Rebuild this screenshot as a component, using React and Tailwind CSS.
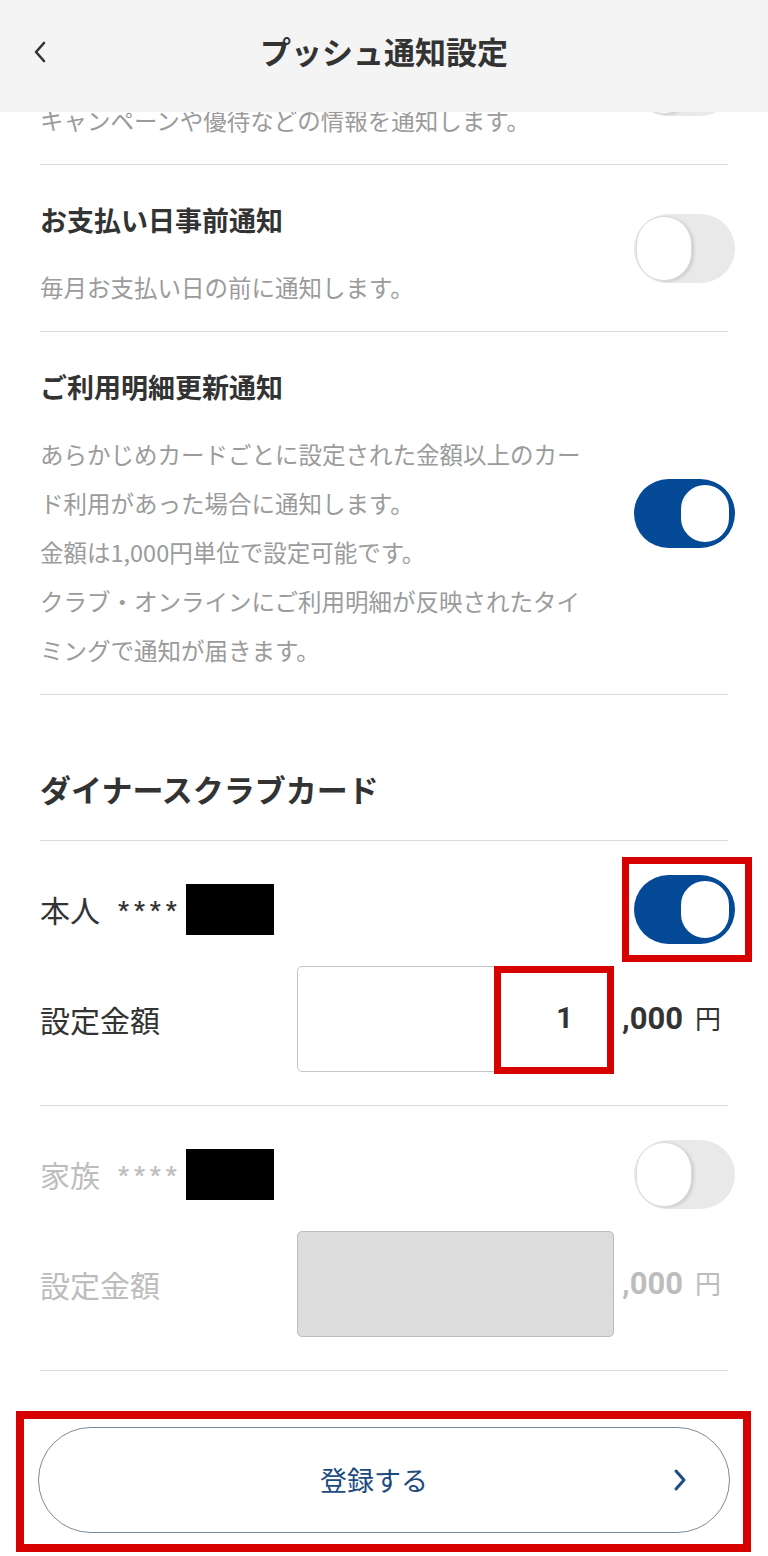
import React from "react";

function Toggle({ on }) {
  return (
    <div
      className={`w-[101px] h-[69px] rounded-full p-[2px] flex ${
        on ? "bg-[#054a96] justify-end" : "bg-[#e9e9e9] justify-start"
      }`}
    >
      <div
        className={`w-[56px] h-full rounded-full bg-white ${
          on ? "border-[4px] border-[#054a96]" : "border border-[#dadada] shadow-[2px_1px_3px_rgba(0,0,0,0.12)]"
        }`}
      />
    </div>
  );
}

function Section({ title, lines, on }) {
  return (
    <div className="flex items-center justify-between border-b border-[#dcdcdc]">
      <div className="pt-[37px] pb-[19px]">
        {title ? (
          <h2 className="text-[27px] leading-[36px] font-bold text-[#333]">{title}</h2>
        ) : (
          <div className="h-[36px]" />
        )}
        <div className="mt-[25px] text-[23.5px] leading-[49px] text-[#9b9b9b]">
          {lines.map((l) => (
            <p key={l} className="whitespace-nowrap">{l}</p>
          ))}
        </div>
      </div>
      <div className="-mr-[7px]">
        <Toggle on={on} />
      </div>
    </div>
  );
}

function CardBlock({ name, on, disabled, highlight }) {
  const text = disabled ? "text-[#bdbdbd]" : "text-[#333]";
  return (
    <div className="border-b border-[#dcdcdc] pt-[34px] pb-[33px]">
      <div className="flex items-center justify-between h-[69px]">
        <div className={`flex items-center text-[30px] ${text}`}>
          <span>{name}</span>
          <span className="ml-[18px] text-[24px] font-bold tracking-[5px] font-[family-name:Roboto,sans-serif]">****</span>
          <span className="ml-[4px] w-[88px] h-[51px] bg-black" />
        </div>
        <div className="relative -mr-[7px]">
          <Toggle on={on} />
          {highlight && (
            <span className="absolute -left-[12px] -right-[17px] -top-[18px] -bottom-[18px] border-[7px] border-[#d60000]" />
          )}
        </div>
      </div>
      <div className="flex items-center mt-[22px] h-[106px]">
        <span className={`w-[257px] text-[30px] ${text}`}>設定金額</span>
        <div
          className={`relative w-[317px] h-full rounded-[5px] border-[1.5px] flex items-center justify-end pr-[40px] ${
            disabled ? "bg-[#dcdcdc] border-[#bcbcbc]" : "bg-white border-[#c4c4c4]"
          }`}
        >
          {!disabled && (
            <span className="text-[29px] font-bold text-[#333] font-[family-name:Roboto,sans-serif]">1</span>
          )}
          {highlight && (
            <span className="absolute left-[196px] -right-[1px] -top-[1px] -bottom-[3px] border-[7px] border-[#d60000]" />
          )}
        </div>
        <span className={`ml-[8px] flex items-baseline ${text}`}>
          <span className="text-[31px] font-bold font-[family-name:Roboto,sans-serif]">,000</span>
          <span className="ml-[12px] text-[26px]">円</span>
        </span>
      </div>
    </div>
  );
}

export default function App() {
  return (
    <div className="relative w-[768px] h-[1556px] overflow-hidden bg-white font-[family-name:Noto_Sans_CJK_JP,sans-serif]">
      <header className="absolute top-0 left-0 right-0 z-10 h-[112px] bg-[#f4f4f4] flex items-center justify-center">
        <button className="absolute left-[30px] top-[38px] w-[20px] h-[28px] flex items-center justify-center">
          <svg width="16" height="24" viewBox="0 0 16 24" fill="none">
            <path d="M12 3 L4 12 L12 21" stroke="#333" strokeWidth="2.6" strokeLinecap="round" strokeLinejoin="round" />
          </svg>
        </button>
        <h1 className="text-[31px] font-bold text-[#333] -mt-[10px]">プッシュ通知設定</h1>
      </header>

      <main className="px-[40px] -mt-[2px]">
        <Section lines={["キャンペーンや優待などの情報を通知します。"]} on={false} />
        <Section title="お支払い日事前通知" lines={["毎月お支払い日の前に通知します。"]} on={false} />
        <Section
          title="ご利用明細更新通知"
          lines={[
            "あらかじめカードごとに設定された金額以上のカー",
            "ド利用があった場合に通知します。",
            "金額は1,000円単位で設定可能です。",
            "クラブ・オンラインにご利用明細が反映されたタイ",
            "ミングで通知が届きます。",
          ]}
          on={true}
        />

        <div className="border-b border-[#dcdcdc] pt-[74px] pb-[31px]">
          <h2 className="text-[31px] leading-[40px] font-bold text-[#333]">ダイナースクラブカード</h2>
        </div>

        <CardBlock name="本人" on={true} highlight />
        <CardBlock name="家族" on={false} disabled />

        <div className="pt-[56px] -mx-[2px]">
          <button className="relative w-full h-[106px] rounded-full border-[1.5px] border-[#7d8a99] bg-white flex items-center justify-center pr-[20px]">
            <span className="text-[27px] text-[#1d4b80]">登録する</span>
            <svg className="absolute right-[42px] top-1/2 -translate-y-1/2" width="14" height="24" viewBox="0 0 14 24" fill="none">
              <path d="M3 3 L11 12 L3 21" stroke="#1d4b80" strokeWidth="3" strokeLinecap="round" strokeLinejoin="round" />
            </svg>
            <span className="absolute -left-[23px] -right-[22px] -top-[17px] -bottom-[20px] border-[8px] border-[#d60000]" />
          </button>
        </div>
      </main>
    </div>
  );
}
